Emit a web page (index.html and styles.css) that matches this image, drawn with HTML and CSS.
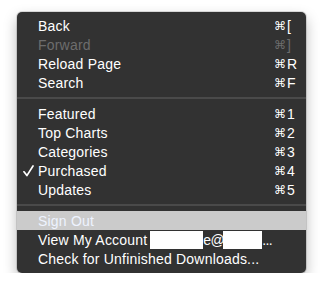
FILE: index.html
```html
<!DOCTYPE html>
<html>
<head>
<meta charset="utf-8">
<link rel="stylesheet" href="styles.css">
</head>
<body>
<div class="menu">
  <div class="item"><span class="check"></span><span class="label">Back</span><span class="key"><span class="cmd">⌘</span><span class="k">[</span></span></div>
  <div class="item disabled"><span class="check"></span><span class="label">Forward</span><span class="key"><span class="cmd">⌘</span><span class="k">]</span></span></div>
  <div class="item"><span class="check"></span><span class="label">Reload Page</span><span class="key"><span class="cmd">⌘</span><span class="k">R</span></span></div>
  <div class="item"><span class="check"></span><span class="label">Search</span><span class="key"><span class="cmd">⌘</span><span class="k">F</span></span></div>
  <div class="sep"></div>
  <div class="item"><span class="check"></span><span class="label">Featured</span><span class="key"><span class="cmd">⌘</span><span class="k">1</span></span></div>
  <div class="item"><span class="check"></span><span class="label">Top Charts</span><span class="key"><span class="cmd">⌘</span><span class="k">2</span></span></div>
  <div class="item"><span class="check"></span><span class="label">Categories</span><span class="key"><span class="cmd">⌘</span><span class="k">3</span></span></div>
  <div class="item"><span class="check"><svg width="11" height="12" viewBox="0 0 11 12"><path d="M1 6.8 L3.9 10.6 L10 1" fill="none" stroke="#fff" stroke-width="1.7" stroke-linecap="round" stroke-linejoin="round"/></svg></span><span class="label">Purchased</span><span class="key"><span class="cmd">⌘</span><span class="k">4</span></span></div>
  <div class="item"><span class="check"></span><span class="label">Updates</span><span class="key"><span class="cmd">⌘</span><span class="k">5</span></span></div>
  <div class="sep"></div>
  <div class="item selected"><span class="check"></span><span class="label">Sign Out</span></div>
  <div class="item"><span class="check"></span><span class="label">View My Account<span class="redact r1"></span><span class="tight">e@</span><span class="redact r2"></span><span class="tight">...</span></span></div>
  <div class="item"><span class="check"></span><span class="label">Check for Unfinished Downloads...</span></div>
</div>
</body>
</html>
```

FILE: styles.css
```css
html, body {
  margin: 0;
  padding: 0;
  background: #ffffff;
}

body {
  padding: 12px 0 0 17px;
  font-family: "Liberation Sans", Arial, sans-serif;
  font-size: 14px;
}

.menu {
  width: 289px;
  box-sizing: border-box;
  background: #323232;
  border-radius: 5px;
  padding: 4px 0 5px;
  box-shadow: 0 0 0 1px rgba(0, 0, 0, 0.12), 0 6px 14px rgba(0, 0, 0, 0.28);
  color: #ffffff;
}

.item {
  height: 19px;
  box-sizing: border-box;
  padding-top: 1px;
  display: flex;
  align-items: center;
  line-height: 18px;
  white-space: nowrap;
}

.check {
  width: 21px;
  flex: none;
  display: flex;
  justify-content: flex-end;
}

.check svg {
  display: block;
  margin-right: 4px;
}

.label {
  flex: 1;
  display: flex;
  align-items: center;
  letter-spacing: 0.2px;
}

.tight {
  letter-spacing: -0.6px;
}

.key {
  width: 32px;
  flex: none;
  display: flex;
  align-items: center;
}

.cmd {
  font-family: "DejaVu Sans", sans-serif;
  font-size: 12px;
  width: 12px;
}

.k {
  margin-left: 1px;
}

.disabled {
  color: #6d6d6d;
}

.selected {
  background: #cbcbcb;
  color: #eef3ff;
}

.sep {
  height: 12px;
  display: flex;
  align-items: center;
}

.sep::before {
  content: "";
  display: block;
  width: 100%;
  height: 2px;
  background: #4a4a4a;
}

.redact {
  display: inline-block;
  background: #ffffff;
  height: 18px;
}

.r1 {
  width: 53px;
  margin-left: 3px;
}

.r2 {
  width: 39px;
  margin-left: -1px;
}
```
